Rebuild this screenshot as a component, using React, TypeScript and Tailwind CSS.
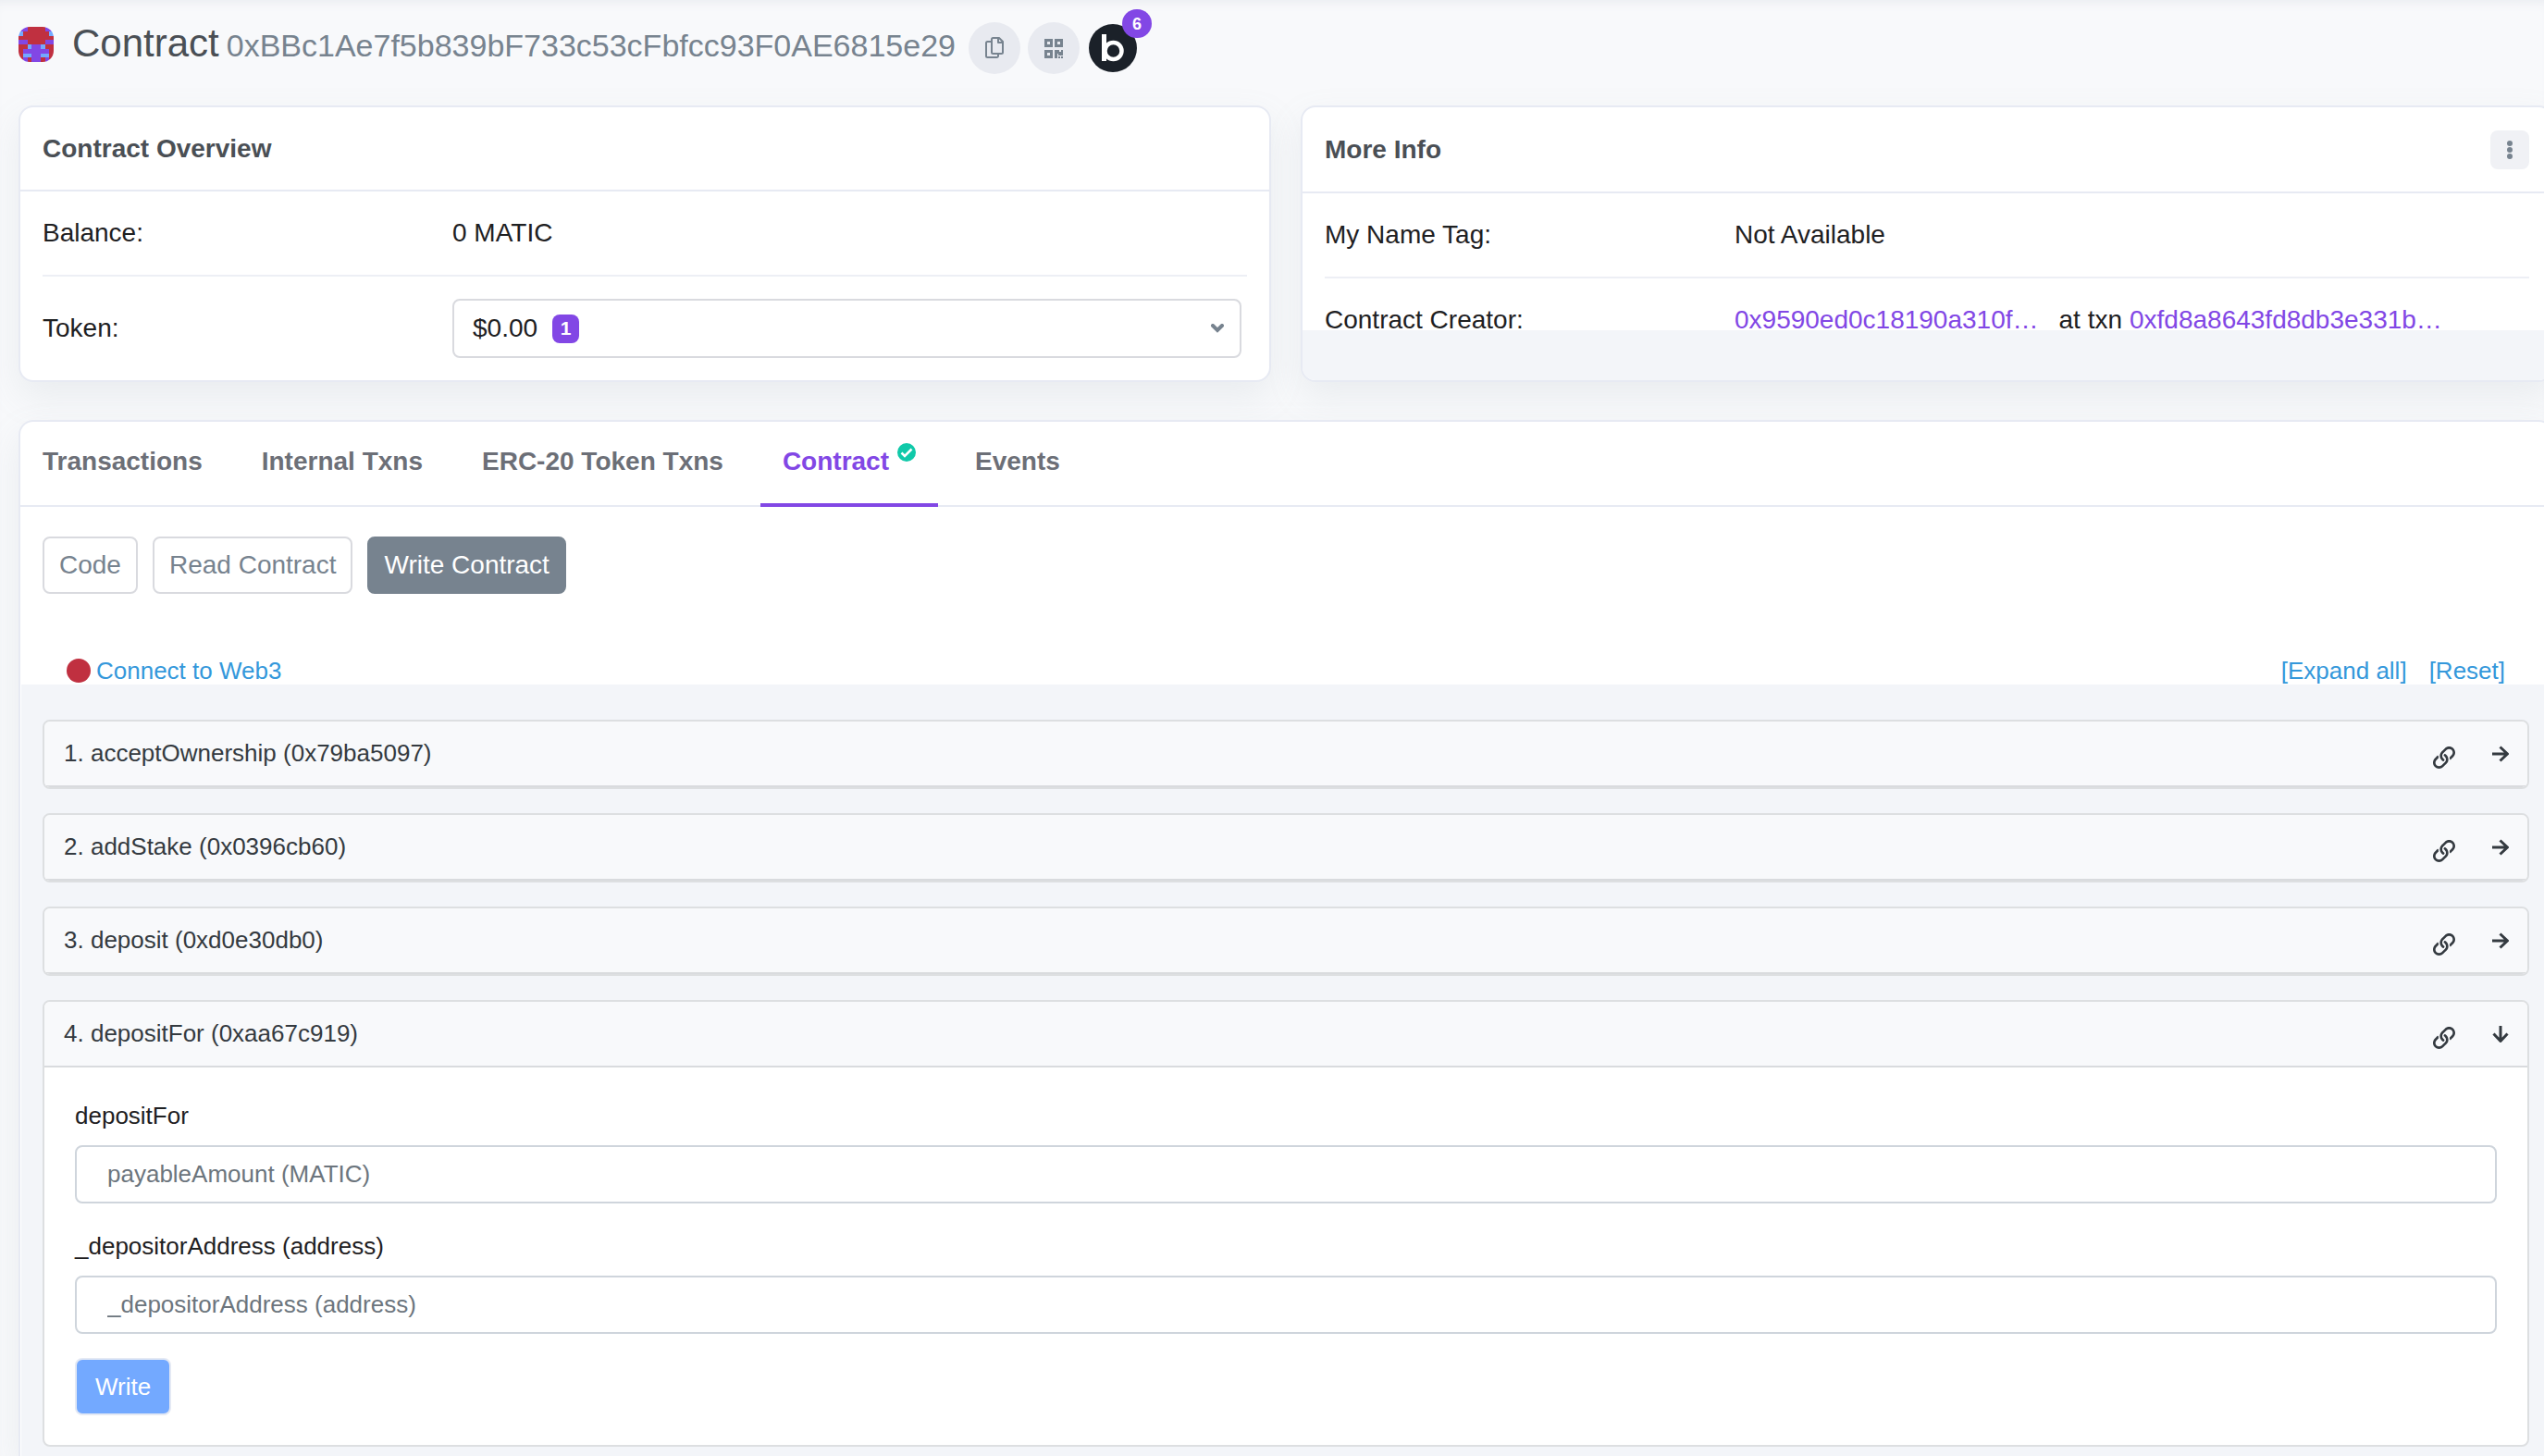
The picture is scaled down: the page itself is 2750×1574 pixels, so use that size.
import { useState } from "react";
import type { ReactNode } from "react";

const identiconRows = [
  "pprrrrpp",
  "brrrrrrb",
  "rrrrrrrr",
  "pprrrrpp",
  "rrbppbrr",
  "rppppppr",
  "rbbppbbr",
  "rprpprpr",
];

const identiconColors: Record<string, string> = {
  r: "#c03040",
  p: "#8247e5",
  b: "#73a9ff",
};

const tabs = ["Transactions", "Internal Txns", "ERC-20 Token Txns", "Contract", "Events"];

const views = ["Code", "Read Contract", "Write Contract"];

const methods = [
  { name: "acceptOwnership", selector: "0x79ba5097" },
  { name: "addStake", selector: "0x0396cb60" },
  { name: "deposit", selector: "0xd0e30db0" },
  { name: "depositFor", selector: "0xaa67c919" },
];

const fields = [
  { id: "payable", label: "depositFor", placeholder: "payableAmount (MATIC)" },
  { id: "depositor", label: "_depositorAddress (address)", placeholder: "_depositorAddress (address)" },
];

const Identicon = () => (
  <svg viewBox="0 0 8 8" className="size-[38px] rounded-xl" shapeRendering="crispEdges">
    {identiconRows.map((row, y) =>
      row
        .split("")
        .map((c, x) => <rect key={`${x}-${y}`} x={x} y={y} width="1" height="1" fill={identiconColors[c]} />)
    )}
  </svg>
);

const CopyIcon = () => (
  <svg viewBox="0 0 20 24" className="h-6 w-5" fill="none" stroke="#77838f" strokeWidth="2" strokeLinejoin="round">
    <path d="M8.5 1H15l4 4v11.5a1.5 1.5 0 0 1-1.5 1.5h-9A1.5 1.5 0 0 1 7 16.5v-14A1.5 1.5 0 0 1 8.500 1z" />
    <path d="M14 1v5h5" />
    <path d="M7 5H2.500A1.500 1.500 0 0 0 1 6.500v14A1.500 1.500 0 0 0 2.500 22h10a1.500 1.500 0 0 0 1.500-1.500V18" />
  </svg>
);

const QrIcon = () => (
  <svg viewBox="0 0 20 21" className="h-[21px] w-5" fill="#77838f">
    <path fillRule="evenodd" d="M0 0h9v9H0zM3 3v3h3V3zM11 0h9v9h-9zM14 3v3h3V3zM0 12h9v9H0zM3 15v3h3v-3z" />
    <path d="M11 12h5v2h2v-2h2v6h-5v-2h-1v5h-3zM15 19h2v2h-2zM18 19h2v2h-2z" />
  </svg>
);

const LinkIcon = () => (
  <svg viewBox="0 0 512 512" className="size-6" fill="#343a40">
    <path d="M314.222 197.78c51.091 51.091 54.377 132.287 9.75 187.16-6.242 7.73-2.784 3.865-84.94 86.02-54.696 54.696-143.266 54.745-197.99 0-54.711-54.69-54.734-143.255 0-197.99 32.773-32.773 51.835-51.899 63.409-63.457 7.463-7.452 20.331-2.354 20.486 8.192a173.31 173.31 0 0 0 4.746 37.828c.966 4.029-.272 8.269-3.202 11.198L80.632 312.57c-32.755 32.775-32.887 85.892 0 118.8 32.775 32.755 85.892 32.887 118.8 0l75.19-75.2c32.718-32.725 32.777-86.013 0-118.79a83.722 83.722 0 0 0-22.814-16.229c-4.623-2.233-7.182-7.25-6.561-12.346 1.356-11.122 6.296-21.885 14.815-30.405l4.375-4.375c3.625-3.626 9.177-4.594 13.76-2.294 12.999 6.524 25.187 15.211 36.025 26.049z" />
    <path d="M470.958 41.04c-54.724-54.745-143.294-54.696-197.99 0-82.156 82.156-78.698 78.29-84.94 86.02-44.627 54.873-41.341 136.069 9.75 187.16 10.838 10.838 23.026 19.525 36.025 26.049 4.582 2.3 10.134 1.331 13.76-2.294l4.375-4.375c8.52-8.519 13.459-19.283 14.815-30.405.621-5.096-1.938-10.113-6.561-12.346a83.706 83.706 0 0 1-22.814-16.229c-32.777-32.777-32.718-86.065 0-118.79l75.19-75.2c32.908-32.887 86.025-32.755 118.8 0 32.887 32.908 32.755 86.025 0 118.8l-45.848 45.84c-2.93 2.929-4.168 7.169-3.202 11.198a173.31 173.31 0 0 1 4.746 37.828c.155 10.546 13.023 15.644 20.486 8.192 11.574-11.558 30.636-30.684 63.409-63.457 54.733-54.735 54.71-143.3-.001-197.991z" />
  </svg>
);

const ArrowIcon = ({ down }: { down?: boolean }) => (
  <svg
    viewBox="0 0 18 18"
    className={down ? "size-[18px] rotate-90" : "size-[18px]"}
    fill="none"
    stroke="#343a40"
    strokeWidth="3"
    strokeLinejoin="round"
  >
    <path d="M0 9h16M8.5 1.5l8 7.500-8 7.500" />
  </svg>
);

const Card = ({ title, action, children }: { title: string; action?: ReactNode; children: ReactNode }) => (
  <section className="flex flex-1 flex-col overflow-hidden rounded-2xl border-2 border-[#e7eaf3] bg-white">
    <div className="flex items-center justify-between border-b-2 border-[#e7eaf3] px-6 pt-[25px] pb-6">
      <h2 className="text-[28px] leading-10 font-bold text-[#4a4f55]">{title}</h2>
      {action}
    </div>
    {children}
  </section>
);

const MethodPanel = () => (
  <form className="px-[33px] py-8" onSubmit={(e) => e.preventDefault()}>
    {fields.map((field) => (
      <div key={field.id} className="mb-[26px]">
        <label htmlFor={field.id} className="mb-3 block leading-10">
          {field.label}
        </label>
        <input
          id={field.id}
          type="text"
          placeholder={field.placeholder}
          className="block h-[63px] w-full rounded-lg border-2 border-[#cfd5dc] bg-white px-[33px] placeholder:text-[#6c757d]"
        />
      </div>
    ))}
    <button type="submit" className="h-[62px] rounded-lg border-2 border-[#e4e9f4] bg-[#73a9ff] px-5 text-white">
      Write
    </button>
  </form>
);

const App = () => {
  const [activeTab, setActiveTab] = useState("Contract");
  const [view, setView] = useState("Write Contract");
  const [open, setOpen] = useState<string[]>(["depositFor"]);

  const toggle = (name: string) => {
    setOpen(open.includes(name) ? open.filter((n) => n !== name) : [...open, name]);
  };

  return (
    <div className="flex min-h-screen flex-col overflow-hidden bg-[#f8f9fb] pl-5 font-['Liberation_Sans',Arial,sans-serif] text-[28px] text-[#1e2022] shadow-[inset_0_10px_14px_-10px_#e4e7ec]">
      <header className="flex items-start gap-2 pt-6 pb-[34px]">
        <div className="mr-[6px] flex h-12 items-center gap-5">
          <Identicon />
          <h1 className="flex items-baseline gap-2 text-[42px] leading-[48px] text-[#4a4f55]">
            Contract
            <span className="text-[34px] text-[#77838f]">0xBBc1Ae7f5b839bF733c53cFbfcc93F0AE6815e29</span>
          </h1>
        </div>
        <button aria-label="Copy address" className="flex size-14 items-center justify-center rounded-full bg-[#e8eaf0]">
          <CopyIcon />
        </button>
        <button aria-label="Show QR code" className="flex size-14 items-center justify-center rounded-full bg-[#e8eaf0]">
          <QrIcon />
        </button>
        <a href="#blockscan" aria-label="Blockscan" className="relative m-[2px] size-[52px] rounded-full bg-[#1b2129]">
          <svg viewBox="0 0 52 52" className="size-full" fill="none" stroke="#fff">
            <path d="M16.500 11v29" strokeWidth="5" />
            <circle cx="26.500" cy="29" r="9" strokeWidth="4.500" />
          </svg>
          <span className="absolute -top-4 left-9 flex h-[31px] w-8 items-center justify-center rounded-full bg-[#8247e5] text-lg font-bold text-white">
            6
          </span>
        </a>
      </header>

      <div className="-mr-[10px] flex gap-8 pb-[41px] *:shadow-[0_16px_38px_rgba(140,152,164,0.13)]">
        <Card title="Contract Overview">
          <div className="mx-6 flex items-center border-b-2 border-[#edeff5] py-6 leading-[42px]">
            <div className="w-[443px]">Balance:</div>
            <div>0 MATIC</div>
          </div>
          <div className="mx-6 flex items-center py-6">
            <div className="w-[443px]">Token:</div>
            <button className="mr-[6px] flex h-16 flex-1 items-center rounded-lg border-2 border-[#d9dadf] pr-4 pl-5">
              $0.00
              <span className="ml-4 flex h-[31px] w-[29px] items-center justify-center rounded-lg bg-[#8247e5] text-[21px] font-bold text-white">
                1
              </span>
              <svg viewBox="0 0 16 10" className="ml-auto h-[10px] w-4" fill="none" stroke="#77838f" strokeWidth="4">
                <path d="M3 2l5 5 5-5" strokeLinecap="round" />
              </svg>
            </button>
          </div>
        </Card>

        <Card
          title="More Info"
          action={
            <button aria-label="More options" className="flex size-[42px] items-center justify-center rounded-lg bg-[#f0f1f5]">
              <svg viewBox="0 0 6 20" className="h-5 w-[6px]" fill="#77838f">
                <circle cx="3" cy="3" r="3" />
                <circle cx="3" cy="10" r="3" />
                <circle cx="3" cy="17" r="3" />
              </svg>
            </button>
          }
        >
          <div className="mx-6 flex items-center border-b-2 border-[#edeff5] py-6 leading-[42px]">
            <div className="w-[443px]">My Name Tag:</div>
            <div>Not Available</div>
          </div>
          <div className="mx-6 flex h-14 items-start pt-6 leading-[42px]">
            <div className="w-[443px]">Contract Creator:</div>
            <a href="#creator" className="text-[#8247e5]">
              0x9590ed0c18190a310f…
            </a>
            <span className="mr-2 ml-[22px]">at txn</span>
            <a href="#txn" className="text-[#8247e5]">
              0xfd8a8643fd8db3e331b…
            </a>
          </div>
          <div className="flex-1 bg-[#f3f5f9]" />
        </Card>
      </div>

      <main className="-mr-[10px] flex flex-1 flex-col overflow-hidden rounded-t-2xl border-2 border-b-0 border-[#e7eaf3] bg-white shadow-[0_16px_38px_rgba(140,152,164,0.13)]">
        <nav className="flex gap-4 border-b-2 border-[#e7eaf3]">
          {tabs.map((tab) => (
            <button
              key={tab}
              onClick={() => setActiveTab(tab)}
              className={`-mb-[2px] flex h-[92px] items-center gap-[9px] border-b-4 px-6 pb-[2px] font-bold ${
                activeTab === tab ? "border-[#8247e5] text-[#8247e5]" : "border-transparent text-[#6c6f77]"
              }`}
            >
              {tab}
              {tab === "Contract" && (
                <svg viewBox="0 0 20 20" className="mb-5 size-5">
                  <circle cx="10" cy="10" r="10" fill="#10c9a9" />
                  <path d="M4.500 10.500 8 14l7.500-7.500" fill="none" stroke="#fff" strokeWidth="2.500" />
                </svg>
              )}
            </button>
          ))}
        </nav>

        <div className="flex gap-4 px-6 pt-8">
          {views.map((v) => (
            <button
              key={v}
              onClick={() => setView(v)}
              className={`h-[62px] rounded-lg border-2 px-4 ${
                view === v ? "border-[#77838f] bg-[#77838f] text-white" : "border-[#d9dadf] bg-white text-[#77838f]"
              }`}
            >
              {v}
            </button>
          ))}
        </div>

        <div className="mt-[70px] flex items-center px-[50px] pb-[2px] text-[26px] leading-[26px] text-[#3498db]">
          <span className="mr-[6px] size-[26px] rounded-full bg-[#c03040]" />
          <a href="#connect">Connect to Web3</a>
          <a href="#expand" className="ml-auto">
            [Expand all]
          </a>
          <a href="#reset" className="ml-6">
            [Reset]
          </a>
        </div>

        <div className="ml-px flex flex-1 flex-col gap-[26px] bg-[#f3f5f9] pt-[38px] pr-6 pb-[11px] pl-[23px] text-[26px]">
          {methods.map((method, i) => {
            const isOpen = open.includes(method.name);
            return (
              <div key={method.name} className="overflow-hidden rounded-lg border-2 border-[#dddfe1] bg-white">
                <div className="flex h-[71px] items-center border-b-2 border-[#d9dbde] bg-[#f8f9fb] pr-5 text-[#343a40]">
                  <button onClick={() => toggle(method.name)} className="h-full flex-1 pl-[21px] text-left">
                    {i + 1}. {method.name} ({method.selector})
                  </button>
                  <a href={`#${method.selector}`} aria-label={`Link to ${method.name}`} className="mt-2 mr-10">
                    <LinkIcon />
                  </a>
                  <button onClick={() => toggle(method.name)} aria-label={`Toggle ${method.name}`}>
                    <ArrowIcon down={isOpen} />
                  </button>
                </div>
                {isOpen && <MethodPanel />}
              </div>
            );
          })}
        </div>
      </main>
    </div>
  );
};

export default App;
